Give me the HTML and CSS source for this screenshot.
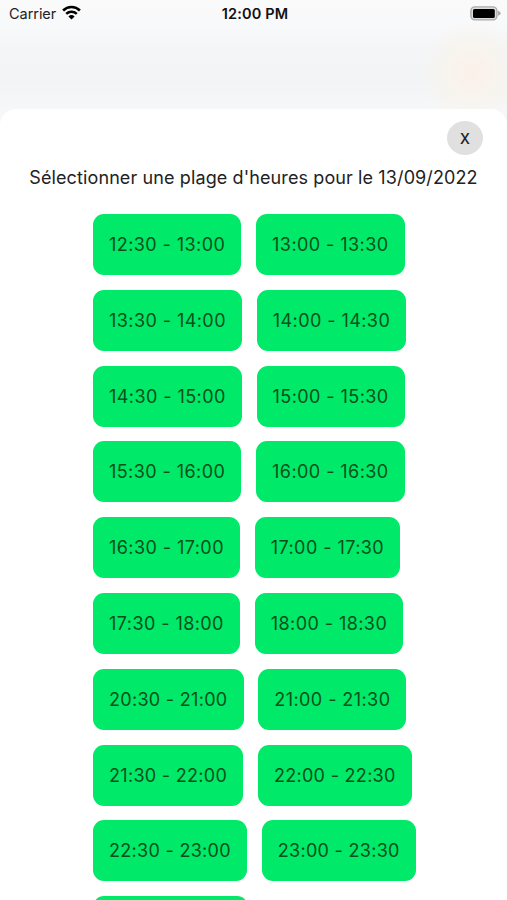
FILE: index.html
```html
<!DOCTYPE html>
<html lang="fr">

<head>
    <meta charset="UTF-8">
    <meta name="viewport" content="width=device-width, initial-scale=1.0">
    <title>Plage d'heures</title>
    <link rel="stylesheet" href="styles.css">
</head>

<body>

    <header class="status-bar">
        <div class="carrier">
            <span>Carrier</span>
            <svg class="wifi" viewBox="0 0 19 15" width="19" height="15">
                <path d="M1.1 5.5a12 12 0 0 1 16.8 0" fill="none" stroke="#000" stroke-width="2.6"/>
                <path d="M4.2 8.9a7.6 7.6 0 0 1 10.6 0" fill="none" stroke="#000" stroke-width="2.4"/>
                <path d="M9.5 14.6L6.4 11.4a4.5 4.5 0 0 1 6.2 0z" fill="#000"/>
            </svg>
        </div>
        <div class="time">12:00 PM</div>
        <svg class="battery" viewBox="0 0 31 15" width="31" height="15">
            <rect x=".9" y=".9" width="26" height="13" rx="4" fill="#ddd" stroke="#aaa" stroke-width="1.4"/>
            <rect x="3" y="2.9" width="21.8" height="9" rx="1.5" fill="#000"/>
            <path d="M28 4.7q2.6.7 2.6 2.5t-2.6 2.5z" fill="#aaa"/>
        </svg>
    </header>

    <main class="sheet">
        <button class="close">x</button>
        <h1>Sélectionner une plage d'heures pour le 13/09/2022</h1>

        <div class="slots">
            <button class="slot">12:30 - 13:00</button>
            <button class="slot">13:00 - 13:30</button>
            <button class="slot">13:30 - 14:00</button>
            <button class="slot">14:00 - 14:30</button>
            <button class="slot">14:30 - 15:00</button>
            <button class="slot">15:00 - 15:30</button>
            <button class="slot">15:30 - 16:00</button>
            <button class="slot">16:00 - 16:30</button>
            <button class="slot">16:30 - 17:00</button>
            <button class="slot">17:00 - 17:30</button>
            <button class="slot">17:30 - 18:00</button>
            <button class="slot">18:00 - 18:30</button>
            <button class="slot tight">20:30 - 21:00</button>
            <button class="slot">21:00 - 21:30</button>
            <button class="slot tight">21:30 - 22:00</button>
            <button class="slot tight">22:00 - 22:30</button>
            <button class="slot tight">22:30 - 23:00</button>
            <button class="slot tight">23:00 - 23:30</button>
            <button class="slot tight">23:30 - 00:00</button>
        </div>
    </main>

</body>

</html>
```

FILE: styles.css
```css
:root {
    --slot-color: #00e968;
    --slot-text: #07501b;
    --text-color: #222;
}

* {
    box-sizing: border-box;
}

body {
    display: flex;
    flex-direction: column;
    height: 100vh;
    margin: 0;
    overflow: hidden;
    font-family: Inter, 'Liberation Sans', sans-serif;
    color: var(--text-color);
    background:
        radial-gradient(circle at 472px 72px, #fbf0ea 0, #f8f4ee 24px, rgba(248, 246, 242, 0) 52px),
        linear-gradient(#fafafa 0, #f8f9fa 25px, #f3f5f7 52px, #f3f4f6 80px, #f6f7f8 110px);
}

.status-bar {
    display: grid;
    grid-template-columns: 1fr auto 1fr;
    align-items: center;
    flex: none;
    height: 109px;
    padding: 0 6px 82px 9px;
    font-size: 14.5px;
}

.carrier {
    display: flex;
    align-items: center;
    gap: 6px;
    letter-spacing: -0.05px;
}

.wifi {
    margin-top: -2px;
}

.time {
    color: #111;
    font-weight: 600;
    letter-spacing: 0.15px;
}

.battery {
    justify-self: end;
}

.sheet {
    display: flex;
    flex-direction: column;
    flex: 1;
    min-height: 0;
    padding-top: 12px;
    overflow: hidden;
    background: white;
    border-radius: 16px 16px 0 0;
}

.close {
    align-self: flex-end;
    flex: none;
    width: 36px;
    height: 34px;
    margin-right: 24px;
    padding: 0 0 1px;
    border: none;
    border-radius: 50%;
    background: #e0e0e0;
    color: var(--text-color);
    font: 19px Inter, sans-serif;
}

h1 {
    margin: 11px 0 24px;
    font-size: 18px;
    font-weight: 400;
    line-height: 24px;
    letter-spacing: 0.11px;
    text-align: center;
    white-space: nowrap;
}

.slots {
    display: flex;
    flex-wrap: wrap;
    gap: 14.8px;
    width: 330px;
    margin-left: 93px;
}

.slot {
    height: 61px;
    padding: 0 16px;
    border: none;
    border-radius: 11px;
    background: var(--slot-color);
    color: var(--slot-text);
    font: 18px Inter, sans-serif;
    letter-spacing: 0.43px;
    white-space: nowrap;
}

.tight {
    letter-spacing: 0.3px;
}
```
